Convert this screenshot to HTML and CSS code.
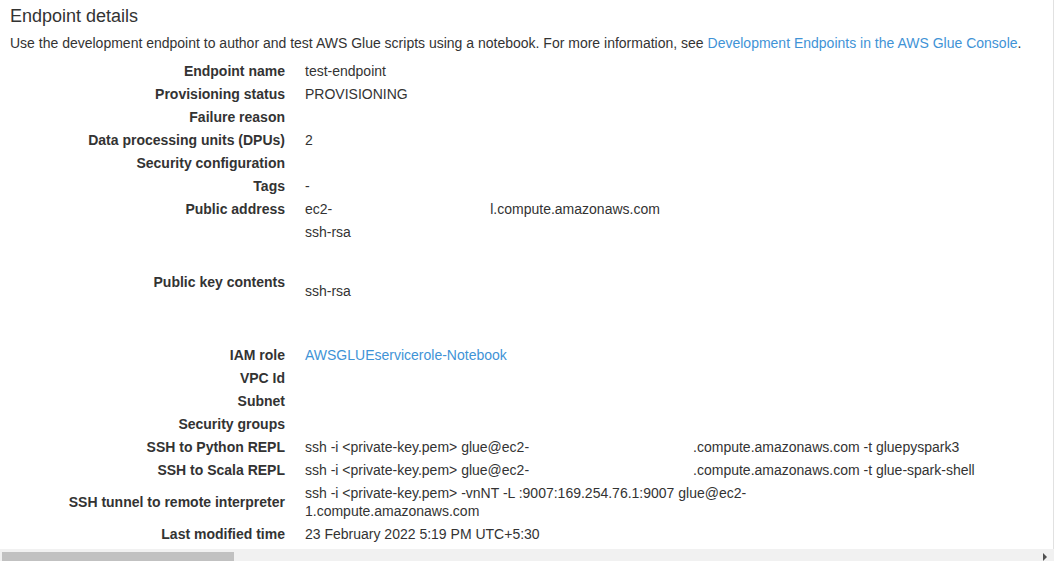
FILE: index.html
```html
<!DOCTYPE html>
<html lang="en">
  <head>
    <meta charset="UTF-8" />
    <meta name="viewport" content="width=device-width, initial-scale=1.0" />
    <title>Endpoint details</title>
    <link rel="stylesheet" href="styles.css">
  </head>
  <body>
    <div class="panel">
      <h2>Endpoint details</h2>
      <p class="intro">
        Use the development endpoint to author and test AWS Glue scripts using a notebook. For more information, see
        <a href="#">Development Endpoints in the AWS Glue Console</a>.
      </p>
      <table class="details">
        <tr><th>Endpoint name</th><td>test-endpoint</td></tr>
        <tr><th>Provisioning status</th><td>PROVISIONING</td></tr>
        <tr><th>Failure reason</th><td></td></tr>
        <tr><th>Data processing units (DPUs)</th><td>2</td></tr>
        <tr><th>Security configuration</th><td></td></tr>
        <tr><th>Tags</th><td>-</td></tr>
        <tr>
          <th>Public address</th>
          <td>ec2-<span class="hidden-part w-158"></span>l.compute.amazonaws.com</td>
        </tr>
        <tr>
          <th>Public key contents</th>
          <td class="key">
            <div class="line">ssh-rsa</div>
            <div class="line"></div>
            <div class="line"></div>
            <div class="line second">ssh-rsa</div>
            <div class="line"></div>
            <div class="line"></div>
          </td>
        </tr>
        <tr><th>IAM role</th><td><a href="#">AWSGLUEservicerole-Notebook</a></td></tr>
        <tr><th>VPC Id</th><td></td></tr>
        <tr><th>Subnet</th><td></td></tr>
        <tr><th>Security groups</th><td></td></tr>
        <tr>
          <th>SSH to Python REPL</th>
          <td>ssh -i &lt;private-key.pem&gt; glue@ec2-<span class="hidden-part w-164"></span>.compute.amazonaws.com -t gluepyspark3</td>
        </tr>
        <tr>
          <th>SSH to Scala REPL</th>
          <td>ssh -i &lt;private-key.pem&gt; glue@ec2-<span class="hidden-part w-164"></span>.compute.amazonaws.com -t glue-spark-shell</td>
        </tr>
        <tr>
          <th>SSH tunnel to remote interpreter</th>
          <td>
            <div class="line">ssh -i &lt;private-key.pem&gt; -vnNT -L :9007:169.254.76.1:9007 glue@ec2-</div>
            <div class="line">1.compute.amazonaws.com</div>
          </td>
        </tr>
        <tr><th>Last modified time</th><td>23 February 2022 5:19 PM UTC+5:30</td></tr>
      </table>
    </div>
    <div class="hscroll">
      <div class="thumb"></div>
      <div class="arrow"></div>
    </div>
  </body>
</html>
```

FILE: styles.css
```css
html,
body {
  margin: 0;
  height: 100vh;
  overflow: hidden;
  background-color: #fff;
}
body {
  font-family: "Liberation Sans", Arial, sans-serif;
  font-size: 14px;
  color: #333;
}
a {
  color: #3f93d6;
  text-decoration: none;
}
.panel {
  box-sizing: border-box;
  width: 1054px;
  height: 549px;
  padding: 5px 10px 0;
  border-right: 1px solid #e1e1e1;
}
h2 {
  font-size: 18px;
  line-height: 22px;
  font-weight: normal;
  margin: 0 0 7px;
}
.intro {
  line-height: 18px;
  margin: 0 0 7px;
  white-space: nowrap;
}
.details {
  border-collapse: collapse;
}
.details th,
.details td {
  padding: 3px 10px 2px;
  line-height: 18px;
  vertical-align: middle;
  white-space: nowrap;
}
.details th {
  width: 265px;
  text-align: right;
  font-weight: bold;
}
.details td {
  text-align: left;
}
.hidden-part {
  display: inline-block;
}
.w-158 {
  width: 158px;
}
.w-164 {
  width: 164px;
}
.line {
  height: 18px;
}
.details td.key {
  padding-bottom: 7px;
}
.key .second {
  margin-top: 5px;
}
.hscroll {
  position: relative;
  width: 1054px;
  height: 15px;
  background-color: #f1f1f1;
}
.thumb {
  position: absolute;
  left: 2px;
  top: 3px;
  width: 232px;
  height: 9px;
  background-color: #c1c1c1;
}
.arrow {
  position: absolute;
  right: 7px;
  top: 4px;
  width: 0;
  height: 0;
  border-top: 4px solid transparent;
  border-bottom: 4px solid transparent;
  border-left: 4px solid #505050;
}
```
